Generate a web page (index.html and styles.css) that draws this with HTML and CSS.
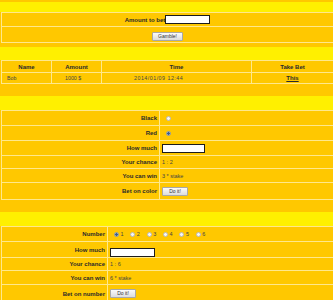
FILE: index.html
```html
<!DOCTYPE html>
<html lang="en">
<head>
  <meta charset="UTF-8">
  <title>Gamble</title>
  <link rel="stylesheet" href="styles.css">
</head>
<body>

  <div class="bar bar-top"></div>
  <form class="grid grid-bet">
    <div class="cell center">
      <label for="amount" class="strong">Amount to bet</label><input type="text" id="amount" class="field">
    </div>
    <div class="cell center gamble-cell">
      <button type="button" class="btn btn-gamble">Gamble!</button>
    </div>
  </form>

  <div class="bar bar-list"></div>
  <div class="grid grid-list">
    <div class="cell head">Name</div>
    <div class="cell head">Amount</div>
    <div class="cell head">Time</div>
    <div class="cell head">Take Bet</div>
    <div class="cell data name-col">Bob</div>
    <div class="cell data amount-col">1000 $</div>
    <div class="cell data time-col">2014/01/09 12:44</div>
    <div class="cell data take-col"><a href="#" class="take">This</a></div>
  </div>

  <div class="bar bar-color"></div>
  <form class="grid grid-color">
    <div class="cell label">Black</div>
    <div class="cell value"><input type="radio" name="color" class="radio"></div>
    <div class="cell label">Red</div>
    <div class="cell value"><input type="radio" name="color" class="radio" checked></div>
    <div class="cell label">How much</div>
    <div class="cell value"><input type="text" class="field field-small"></div>
    <div class="cell label">Your chance</div>
    <div class="cell value">1 : 2</div>
    <div class="cell label">You can win</div>
    <div class="cell value">3 * stake</div>
    <div class="cell label">Bet on color</div>
    <div class="cell value"><button type="button" class="btn btn-do">Do it!</button></div>
  </form>

  <div class="bar bar-number"></div>
  <form class="grid grid-number">
    <div class="cell label">Number</div>
    <div class="cell value numbers">
      <label class="num"><input type="radio" name="number" class="radio" checked>1</label>
      <label class="num"><input type="radio" name="number" class="radio">2</label>
      <label class="num"><input type="radio" name="number" class="radio">3</label>
      <label class="num"><input type="radio" name="number" class="radio">4</label>
      <label class="num"><input type="radio" name="number" class="radio">5</label>
      <label class="num"><input type="radio" name="number" class="radio">6</label>
    </div>
    <div class="cell label">How much</div>
    <div class="cell value low"><input type="text" class="field"></div>
    <div class="cell label">Your chance</div>
    <div class="cell value">1 : 6</div>
    <div class="cell label">You can win</div>
    <div class="cell value">6 * stake</div>
    <div class="cell label">Bet on number</div>
    <div class="cell value"><button type="button" class="btn btn-do">Do it!</button></div>
  </form>

</body>
</html>
```

FILE: styles.css
```css
html, body {
  overflow: hidden;
}
body {
  margin: 0;
  padding-top: 2px;
  background-color: #ffc800;
  font-family: "Liberation Sans", Arial, sans-serif;
  font-size: 6px;
  color: #2a2a2a;
}
.bar {
  background-color: #fff000;
  height: 14px;
}
.bar-top {
  height: 10px;
}
.bar-list {
  height: 13px;
  margin-top: 4px;
}
.bar-color,
.bar-number {
  margin-top: 12px;
}
.grid {
  display: grid;
  gap: 1px;
  padding: 1px;
  margin: 0 0 0 1px;
  width: 333px;
  box-sizing: border-box;
  background-color: #ffe88c;
}
.grid-bet {
  grid-template-rows: 13px 15px;
}
.grid-list {
  grid-template-columns: 49px 49px 149px 81px;
  grid-template-rows: 11px 10px;
}
.grid-color {
  grid-template-columns: 157px 173px;
  grid-template-rows: 14px 14px 14px 12px 13px 16px;
}
.grid-number {
  grid-template-columns: 105px 225px;
  grid-template-rows: 14px 15px 12px 13px 17px;
}
.cell {
  background-color: #ffc800;
  display: flex;
  align-items: center;
  min-width: 0;
  white-space: nowrap;
}
.center {
  justify-content: center;
}
.strong,
.head,
.label {
  font-weight: bold;
}
.head {
  justify-content: center;
}
.label {
  justify-content: flex-end;
  padding-right: 2px;
}
.value {
  padding-left: 2px;
  font-size: 5.5px;
  color: #454545;
}
.data {
  font-size: 5.3px;
  color: #454545;
}
.name-col {
  padding-left: 5px;
}
.amount-col {
  padding-left: 13px;
}
.time-col {
  padding-left: 32px;
  letter-spacing: 0.5px;
}
.take-col {
  justify-content: center;
}
.take {
  color: #2a2a2a;
  font-weight: bold;
  font-size: 6px;
}
.gamble-cell {
  align-items: flex-end;
  padding-bottom: 1px;
}
.low {
  align-items: flex-end;
}
.field {
  width: 45px;
  height: 9px;
  margin: 0;
  padding: 0;
  box-sizing: border-box;
  border: 1px solid #1c1c1c;
  background-color: #fff;
}
.field-small {
  width: 43px;
}
.btn {
  height: 9px;
  margin: 0;
  padding: 0;
  box-sizing: border-box;
  font-family: inherit;
  font-size: 5px;
  line-height: 7px;
  color: #333;
  background: linear-gradient(#fbfbfb, #dcdcdc);
  border: 1px solid #a8a8a8;
  border-radius: 1px;
}
.btn-gamble {
  width: 31px;
}
.btn-do {
  width: 26px;
}
.radio {
  appearance: none;
  width: 5px;
  height: 5px;
  margin: 0 0 0 4px;
  box-sizing: border-box;
  border: 1px solid #b8b8b8;
  border-radius: 50%;
  background-color: #f6f6f6;
}
.radio:checked {
  background: radial-gradient(circle, #3d5d8d 0 1.2px, #e6edf4 1.6px);
  border-color: #8a9ab0;
}
.num {
  display: inline-flex;
  align-items: center;
  margin-right: 2.8px;
}
.num .radio {
  margin-right: 1.5px;
}
```
